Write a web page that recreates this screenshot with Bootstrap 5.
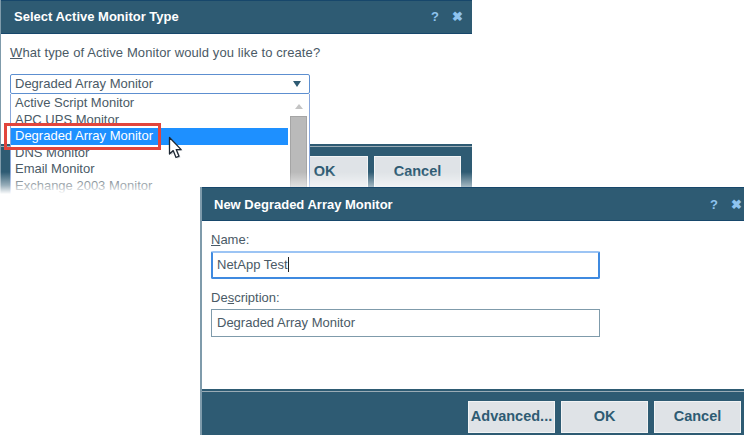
<!DOCTYPE html>
<html lang="en"><head><meta charset="utf-8"><title>Monitor</title>
<link href="https://cdn.jsdelivr.net/npm/bootstrap@5.3.0/dist/css/bootstrap.min.css" rel="stylesheet">
<style>
html,body{width:744px;height:435px;overflow:hidden;background:#fff;margin:0}
body{font-family:"Liberation Sans",Arial,sans-serif;font-size:13px;line-height:15px;color:#4a5a66;position:relative}
.win{position:absolute;background:#fff;display:flex;flex-direction:column;overflow:hidden}
.win-a{left:0;top:0;width:472px;height:195px;border-left:1px solid #7f9bab}
.win-b{left:200px;top:187px;width:560px;height:248px;border-left:2px solid #7f9bab}
.tbar{background:#2e5b73;border-top:1px solid #17476b;border-bottom:1px solid #17476b;color:#fff;font-weight:700;font-size:13px;display:flex;align-items:center;flex:none;height:34px}
.win-a .tbar{margin-left:-1px;padding:0 9px 2px 14px}
.win-b .tbar{padding:0 18px 0 12px}
.ctl{color:#8fc3ee;font-size:13px;font-weight:700;display:flex;gap:13px;align-items:center}
.wbody{flex:1 1 auto;min-height:0}
.win-a .wbody{padding:11px 9px 0}
.win-b .wbody{padding:11px 9px 0}
.ask{letter-spacing:.1px}
.fld-label{display:block;margin:0 0 4px}
.fld{display:block;width:389px;height:28px;border:1px solid #7f9bab;border-radius:0;padding:0 5px;color:#4a5a66;line-height:26px;margin-bottom:11px}
.fld-on{border:2px solid #3f8ae0;border-top-color:#9cc4f4;padding:0 4px;line-height:24px;border-radius:2px}
.caret{display:inline-block;width:1px;height:15px;background:#222;vertical-align:-3px}
.combo{width:300px;height:20px;border:1px solid #5d8fd0;border-radius:2px;margin-top:14px;padding:0 4px;line-height:18px;display:flex;justify-content:space-between;align-items:center}
.tri{width:0;height:0;border-left:4px solid transparent;border-right:4px solid transparent;border-top:6px solid #2e5b73;margin-right:4px}
.fbar{background:#2e5b73;flex:none;display:flex;justify-content:flex-end;gap:6px;position:relative}
.fbar::before{content:"";position:absolute;left:0;right:0;top:2px;height:1px;background:#9aacb6}
.win-a .fbar{height:51px;padding:12px 11px 0 0;margin-left:-1px}
.win-b .fbar{height:46px;padding:12px 19px 0 0}
.bbtn{width:87px;height:32px;padding:0 0 2px;border:1px solid #f2f4f5;border-radius:0;background:#dfe3e7;color:#2e5b73;font-weight:700;font-size:14.5px;line-height:26px;--bs-btn-hover-bg:#dfe3e7}
.droplist{position:absolute;left:10px;top:94px;width:300px;height:101px;background:#fff;border-left:1px solid #8aa8dc;border-right:1px solid #8aa8dc;display:flex}
.opts{flex:1 1 auto;padding-top:1px}
.opt{height:16.6px;line-height:16.6px;padding-left:4px;white-space:nowrap;overflow:hidden}
.opt-on{background:#1e90ff;color:#fff}
.sb{flex:none;width:21px;padding:0 2px;background:#fff;display:flex;flex-direction:column;align-items:center}
.sb-up{width:0;height:0;border-left:4px solid transparent;border-right:4px solid transparent;border-bottom:5px solid #c4c4c4;margin:10px 0 7px}
.sb-th{width:17px;flex:1 1 auto;background:#bababa;border:1px solid #a5a5a5}
.veil{position:absolute;left:0;top:172px;width:472px;height:24px;background:linear-gradient(to bottom,rgba(255,255,255,0),rgba(255,255,255,.5) 55%,#fff 92%)}
.hl{position:absolute;left:4px;top:123px;width:157px;height:27px;border:3px solid #e2453c}
.ptr{position:absolute;left:168px;top:136px}
.ul{text-decoration:underline}
</style></head><body>
<div class="win win-a">
 <div class="tbar"><span class="flex-grow-1">Select Active Monitor Type</span><span class="ctl"><span>?</span><span>✖</span></span></div>
 <div class="wbody"><div class="ask"><span class="ul">W</span>hat type of Active Monitor would you like to create?</div>
  <div class="combo"><span>Degraded Array Monitor</span><span class="tri"></span></div></div>
 <div class="fbar"><button class="btn bbtn">OK</button><button class="btn bbtn">Cancel</button></div>
</div>
<div class="droplist">
 <div class="opts">
  <div class="opt">Active Script Monitor</div><div class="opt">APC UPS Monitor</div>
  <div class="opt opt-on">Degraded Array Monitor</div><div class="opt">DNS Monitor</div>
  <div class="opt">Email Monitor</div><div class="opt">Exchange 2003 Monitor</div>
 </div>
 <div class="sb"><span class="sb-up"></span><div class="sb-th"></div></div>
</div>
<div class="veil"></div>
<div class="hl"></div>
<svg class="ptr" width="18" height="26" viewBox="0 0 18 26"><path d="M3 3V19L6.7 15.8L9.5 22.5L12.5 21.2L9.7 14.8H14.7Z" fill="#9aa3ab" opacity=".55"/><path d="M1.5 1.5V18L5.2 14.6L8 21.5L11 20.2L8.2 13.6H13.2Z" fill="#fff" stroke="#1d2733" stroke-width="1.3" stroke-linejoin="round"/></svg>
<div class="win win-b">
 <div class="tbar"><span class="flex-grow-1">New Degraded Array Monitor</span><span class="ctl"><span>?</span><span>✖</span></span></div>
 <div class="wbody">
  <label class="fld-label"><span class="ul">N</span>ame:</label>
  <div class="fld fld-on">NetApp Test<span class="caret"></span></div>
  <label class="fld-label">De<span class="ul">s</span>cription:</label>
  <div class="fld">Degraded Array Monitor</div>
 </div>
 <div class="fbar"><button class="btn bbtn">Advanced...</button><button class="btn bbtn">OK</button><button class="btn bbtn">Cancel</button></div>
</div>
</body></html>
